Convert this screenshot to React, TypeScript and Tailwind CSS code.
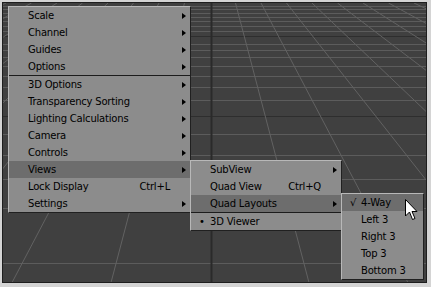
import React from 'react';

type Item =
  | { kind: 'sep' }
  | {
      kind?: 'item';
      label: string;
      shortcut?: string;
      sub?: boolean;
      active?: boolean;
      mark?: string;
    };

const mainItems: Item[] = [
  { label: 'Scale', sub: true },
  { label: 'Channel', sub: true },
  { label: 'Guides', sub: true },
  { label: 'Options', sub: true },
  { kind: 'sep' },
  { label: '3D Options', sub: true },
  { label: 'Transparency Sorting', sub: true },
  { label: 'Lighting Calculations', sub: true },
  { label: 'Camera', sub: true },
  { label: 'Controls', sub: true },
  { label: 'Views', sub: true, active: true },
  { label: 'Lock Display', shortcut: 'Ctrl+L' },
  { label: 'Settings', sub: true },
];

const viewItems: Item[] = [
  { label: 'SubView', sub: true },
  { label: 'Quad View', shortcut: 'Ctrl+Q' },
  { label: 'Quad Layouts', sub: true, active: true },
  { kind: 'sep' },
  { label: '3D Viewer', mark: '•' },
];

const layoutItems: Item[] = [
  { label: '4-Way', mark: '√', active: true },
  { label: 'Left 3' },
  { label: 'Right 3' },
  { label: 'Top 3' },
  { label: 'Bottom 3' },
];

const hLines = [3, 6, 10, 14, 18, 23, 28, 33, 41, 47, 54, 63, 73, 84, 97, 113, 131, 152, 176, 205, 260];
const majorH = [33, 113];

const Grid = () => {
  const vx = 207;
  const vy = -97;
  const step = 25.5;
  const rays = [];
  for (let k = -9; k <= 9; k++) {
    if (k === 0) continue;
    const x0 = vx + (k * step * (0 - vy)) / -vy;
    const x1 = vx + (k * step * (287 - vy)) / -vy;
    rays.push(<line key={k} x1={x0} y1={0} x2={x1} y2={287} stroke="#626262" strokeWidth={1} />);
  }
  return (
    <svg className="absolute inset-0" width={431} height={287}>
      {hLines.map((y) => (
        <line
          key={y}
          x1={0}
          y1={y + 0.5}
          x2={431}
          y2={y + 0.5}
          stroke={majorH.includes(y) ? '#2e2e2e' : '#5c5c5c'}
          strokeWidth={1}
        />
      ))}
      {rays}
      <line x1={208.5} y1={0} x2={208.5} y2={287} stroke="#2a2a2a" strokeWidth={2} />
    </svg>
  );
};

const Arrow = () => (
  <span className="w-0 h-0 border-y-[3px] border-y-transparent border-l-[4px] border-l-black" />
);

const Menu = ({ items, className }: { items: Item[]; className: string }) => (
  <div
    className={`absolute flex flex-col bg-[#8c8c8c] border-t border-l border-[#b8b8b8] border-r border-b border-r-[#202020] border-b-[#202020] ${className}`}
  >
    {items.map((item, i) => {
      if (item.kind === 'sep') {
        return <div key={i} className="h-px bg-[#1c1c1c]" />;
      }
      return (
        <div
          key={i}
          className={`relative flex items-center h-[17px] pl-[19px] pr-[4px] ${item.active ? 'bg-[#6d6d6d]' : ''}`}
        >
          {item.mark && (
            <span className="absolute left-[8px] top-0 leading-[17px]">{item.mark}</span>
          )}
          <span className="flex-1 whitespace-nowrap">{item.label}</span>
          {item.shortcut && <span className="mr-[16px] whitespace-nowrap">{item.shortcut}</span>}
          {item.sub && <Arrow />}
        </div>
      );
    })}
  </div>
);

const Cursor = () => (
  <svg className="absolute left-[405px] top-[199px]" width={13} height={22} viewBox="0 0 13 22">
    <path
      d="M0.5 0.5 L0.5 17 L4.5 13 L7.5 20.5 L10 19.5 L7 12.5 L12 12.5 Z"
      fill="#ffffff"
      stroke="#000000"
      strokeWidth={1}
      strokeLinejoin="miter"
    />
  </svg>
);

export default function App() {
  return (
    <div
      className="w-[431px] h-[287px] bg-[#d4d4d4] pt-[2px] pl-[2px] pr-[4px] pb-[4px] text-black text-[10px] tracking-[-0.2px] overflow-hidden"
      style={{ fontFamily: '"DejaVu Sans", Tahoma, sans-serif' }}
    >
      <div className="relative w-full h-full bg-[#404040] border border-[#1e1e1e] overflow-hidden">
        <Grid />
      </div>
      <div className="absolute left-0 top-0 w-[431px] h-[287px]">
        <Menu items={mainItems} className="left-[8px] top-[6px] w-[183px]" />
        <Menu items={viewItems} className="left-[190px] top-[160px] w-[152px]" />
        <Menu items={layoutItems} className="left-[341px] top-[193px] w-[83px]" />
        <Cursor />
      </div>
    </div>
  );
}
